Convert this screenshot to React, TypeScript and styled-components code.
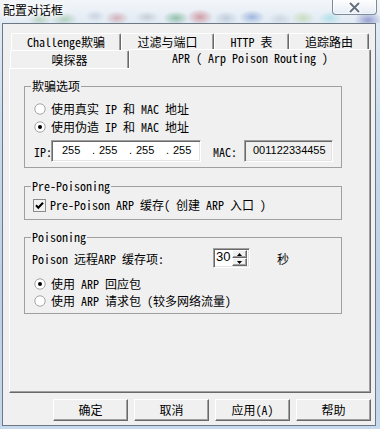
import React from 'react'
import styled, { createGlobalStyle, css } from 'styled-components'

const uiFont = `"Noto Sans Mono CJK SC", "Liberation Mono", "Noto Sans CJK SC", monospace`
const digitFont = `"Liberation Sans", "Noto Sans CJK SC", sans-serif`

const GlobalStyle = createGlobalStyle`
	html, body {
		margin: 0;
		padding: 0;
	}
	body {
		width: 380px;
		height: 429px;
		overflow: hidden;
		font-family: ${uiFont};
		font-size: 12px;
		color: #000;
	}
`

const Window = styled.div`
	width: 380px;
	height: 429px;
	box-sizing: border-box;
	display: flex;
	flex-direction: column;
	padding: 0 4px 3px 2px;
	background: linear-gradient(180deg, #f3f6f9 0px, #e2ebf4 22px, #c9dbec 120px, #bcd0e6 300px, #c7d9ec 429px);
`

const TitleBar = styled.div`
	height: 23px;
	margin: 0 -4px 0 -2px;
	padding-left: 3px;
	display: flex;
	justify-content: space-between;
	align-items: flex-start;
	background:
		radial-gradient(12px 7px at 40px 19px, rgba(120, 175, 120, .45), transparent),
		radial-gradient(14px 7px at 64px 19px, rgba(100, 165, 110, .4), transparent),
		radial-gradient(10px 6px at 95px 16px, rgba(170, 180, 200, .45), transparent),
		radial-gradient(12px 7px at 117px 18px, rgba(190, 110, 120, .45), transparent),
		radial-gradient(12px 6px at 147px 17px, rgba(160, 170, 185, .45), transparent),
		radial-gradient(13px 7px at 176px 18px, rgba(70, 150, 100, .5), transparent),
		radial-gradient(13px 8px at 200px 17px, rgba(190, 80, 90, .5), transparent),
		radial-gradient(12px 7px at 226px 18px, rgba(150, 170, 190, .45), transparent),
		radial-gradient(13px 7px at 252px 17px, rgba(90, 130, 200, .5), transparent),
		radial-gradient(12px 7px at 280px 19px, rgba(170, 185, 200, .4), transparent),
		radial-gradient(12px 7px at 303px 18px, rgba(170, 200, 130, .45), transparent),
		radial-gradient(12px 7px at 330px 18px, rgba(120, 210, 220, .45), transparent),
		radial-gradient(14px 9px at 368px 20px, rgba(90, 100, 180, .55), transparent);
`

const Title = styled.span`
	margin-top: 2px;
	font-family: "Noto Sans CJK SC", sans-serif;
	font-size: 12px;
	line-height: 16px;
	color: #000;
	text-shadow: 0 0 6px #fff, 0 0 8px #fff, 0 0 10px #fff;
`

const CloseButton = styled.div`
	width: 45px;
	height: 15px;
	margin-right: 3px;
	box-sizing: border-box;
	border: 1px solid #7e8a99;
	border-top: none;
	border-radius: 0 0 4px 4px;
	background: linear-gradient(180deg, rgba(255, 255, 255, .75), rgba(228, 236, 245, .55));
	box-shadow: inset 0 0 0 1px rgba(255, 255, 255, .6);
	display: flex;
	align-items: center;
	justify-content: center;
`

const Client = styled.div`
	flex: 1;
	box-sizing: border-box;
	background: #f0f0f0;
	border: 1px solid #6d7886;
	padding: 9px 4px 0 6px;
	display: flex;
	flex-direction: column;
`

const TabRow = styled.div<{indent: number, rowHeight: number}>`
	display: flex;
	align-items: flex-end;
	height: ${(props) => props.rowHeight}px;
	padding-left: ${(props) => props.indent}px;
`

const Tab = styled.div<{width: number, selected?: boolean}>`
	position: relative;
	box-sizing: border-box;
	width: ${(props) => props.width}px;
	height: 100%;
	background: #f0f0f0;
	border-top: 1px solid #fff;
	border-left: 1px solid #fff;
	border-right: 1px solid #696969;
	box-shadow: inset -1px 0 0 #a0a0a0;
	border-radius: 2px 2px 0 0;
	display: flex;
	align-items: center;
	justify-content: center;
	white-space: pre;
	line-height: 14px;

	${(props) => props.selected && css`
		height: 20px;
		margin-bottom: -1px;
		padding-bottom: 4px;
		z-index: 1;
	`}
`

const Panel = styled.div`
	box-sizing: border-box;
	height: 325px;
	border-top: 1px solid #fff;
	border-left: 1px solid #fff;
	border-right: 1px solid #696969;
	border-bottom: 1px solid #696969;
	box-shadow: inset -1px -1px 0 #a0a0a0;
	padding: 10px 0 0 14px;
	display: flex;
	flex-direction: column;
`

const Group = styled.fieldset<{gapTop?: number, padTop: number, padBottom: number}>`
	margin: ${(props) => props.gapTop || 0}px 0 0 0;
	width: 318px;
	min-width: 0;
	box-sizing: border-box;
	border: 1px solid #a0a0a0;
	padding: ${(props) => props.padTop}px 6px ${(props) => props.padBottom}px 9px;
`

const Legend = styled.legend`
	padding: 0 1px;
	margin-left: -3px;
	line-height: 14px;
	white-space: pre;
`

const Row = styled.div<{rowHeight: number, gapTop?: number, shift?: number}>`
	display: flex;
	align-items: center;
	height: ${(props) => props.rowHeight}px;
	margin-top: ${(props) => props.gapTop || 0}px;
	margin-left: ${(props) => props.shift || 0}px;
	white-space: pre;
`

const Mark = styled.span<{gap: number}>`
	display: flex;
	flex: none;
	margin-right: ${(props) => props.gap}px;
`

const Text = styled.span`
	line-height: 14px;
	white-space: pre;
`

const FieldLabel = styled.span<{width: number}>`
	width: ${(props) => props.width}px;
	flex: none;
	white-space: pre;
`

const Sunken = styled.div<{width: number, height: number, readOnly?: boolean, padLeft: number}>`
	box-sizing: border-box;
	flex: none;
	width: ${(props) => props.width}px;
	height: ${(props) => props.height}px;
	border-top: 1px solid #a0a0a0;
	border-left: 1px solid #a0a0a0;
	border-right: 1px solid #fff;
	border-bottom: 1px solid #fff;
	box-shadow: inset 1px 1px 0 #696969, inset -1px -1px 0 #e3e3e3;
	background: ${(props) => props.readOnly ? '#f0f0f0' : '#fff'};
	padding-left: ${(props) => props.padLeft}px;
	display: flex;
	align-items: center;
	font-family: ${digitFont};
	font-size: 11px;
	padding-bottom: 2px;
`

const Octet = styled.span`
	width: 30px;
	flex: none;
`

const Dot = styled.span`
	width: 7px;
	flex: none;
`

const SpinValue = styled.span`
	flex: 1;
	font-size: 13px;
	padding-bottom: 1px;
`

const SpinButtons = styled.div`
	display: flex;
	flex-direction: column;
	width: 15px;
	height: 16px;
	margin-right: 2px;
	margin-top: 2px;
`

const SpinButton = styled.div`
	flex: 1;
	box-sizing: border-box;
	border: 1px solid;
	border-color: #fff #696969 #696969 #fff;
	box-shadow: inset -1px -1px 0 #a0a0a0;
	background: #f0f0f0;
	display: flex;
	align-items: center;
	justify-content: center;
`

const Seconds = styled.span`
	margin-left: 27px;
`

const ButtonRow = styled.div`
	display: flex;
	justify-content: flex-end;
	gap: 6px;
	margin-top: 6px;
	padding-right: 0;
`

const Button = styled.div`
	width: 75px;
	height: 22px;
	box-sizing: border-box;
	border: 1px solid;
	border-color: #fff #696969 #696969 #fff;
	box-shadow: inset -1px -1px 0 #a0a0a0;
	background: #f0f0f0;
	display: flex;
	align-items: center;
	justify-content: center;
	white-space: pre;
	line-height: 14px;
`

const Radio = ({checked}: {checked?: boolean}) => (
	<svg width='12' height='12' viewBox='0 0 12 12'>
		<circle cx='6' cy='6' r='5.2' fill='#fff' stroke='#a4a4a4' strokeWidth='1' />
		{checked && <circle cx='6' cy='6' r='2' fill='#000' />}
	</svg>
)

const Checkbox = () => (
	<svg width='13' height='13' viewBox='0 0 13 13'>
		<rect x='0.5' y='0.5' width='12' height='12' fill='#f2f2f2' stroke='#8c8c8c' />
		<path d='M3 6.3 L5.3 8.7 L10 3.8' fill='none' stroke='#000' strokeWidth='2' />
	</svg>
)

const Arrow = ({up}: {up?: boolean}) => (
	<svg width='5' height='3' viewBox='0 0 5 3'>
		<path d={up ? 'M0 3 L2.5 0 L5 3 Z' : 'M0 0 L2.5 3 L5 0 Z'} fill='#000' />
	</svg>
)

export default function App() {
	return (
		<>
			<GlobalStyle />
			<Window>
				<TitleBar>
					<Title>配置对话框</Title>
					<CloseButton>
						<svg width='13' height='11' viewBox='0 0 13 11'>
							<path d='M2.5 1.5 L10.5 9.5 M10.5 1.5 L2.5 9.5' stroke='#fff' strokeWidth='4' strokeLinecap='round' />
							<path d='M2.5 1.5 L10.5 9.5 M10.5 1.5 L2.5 9.5' stroke='#66717f' strokeWidth='2' strokeLinecap='round' />
						</svg>
					</CloseButton>
				</TitleBar>
				<Client>
					<TabRow indent={2} rowHeight={17}>
						<Tab width={110}>Challenge欺骗</Tab>
						<Tab width={93}>过滤与端口</Tab>
						<Tab width={75}>HTTP 表</Tab>
						<Tab width={80}>追踪路由</Tab>
					</TabRow>
					<TabRow indent={1} rowHeight={18}>
						<Tab width={119}>嗅探器</Tab>
						<Tab width={242} selected>APR ( Arp Poison Routing )</Tab>
					</TabRow>
					<Panel>
						<Group padTop={7} padBottom={5}>
							<Legend>欺骗选项</Legend>
							<Row rowHeight={18}>
								<Mark gap={5}><Radio /></Mark>
								<Text>使用真实 IP 和 MAC 地址</Text>
							</Row>
							<Row rowHeight={18}>
								<Mark gap={5}><Radio checked /></Mark>
								<Text>使用伪造 IP 和 MAC 地址</Text>
							</Row>
							<Row rowHeight={22} gapTop={4}>
								<FieldLabel width={17}>IP:</FieldLabel>
								<Sunken width={150} height={22} padLeft={10}>
									<Octet>255</Octet><Dot>.</Dot>
									<Octet>255</Octet><Dot>.</Dot>
									<Octet>255</Octet><Dot>.</Dot>
									<Octet>255</Octet>
								</Sunken>
								<FieldLabel width={12} />
								<FieldLabel width={31}>MAC:</FieldLabel>
								<Sunken width={89} height={22} padLeft={8} readOnly>001122334455</Sunken>
							</Row>
						</Group>
						<Group gapTop={11} padTop={3} padBottom={5}>
							<Legend>Pre-Poisoning</Legend>
							<Row rowHeight={18} shift={-1}>
								<Mark gap={4}><Checkbox /></Mark>
								<Text>Pre-Poison ARP 缓存( 创建 ARP 入口 )</Text>
							</Row>
						</Group>
						<Group gapTop={10} padTop={4} padBottom={4}>
							<Legend>Poisoning</Legend>
							<Row rowHeight={20} shift={-2}>
								<FieldLabel width={181}>Poison 远程ARP 缓存项:</FieldLabel>
								<Sunken width={37} height={20} padLeft={2} readOnly={false}>
									<SpinValue>30</SpinValue>
									<SpinButtons>
										<SpinButton><Arrow up /></SpinButton>
										<SpinButton><Arrow /></SpinButton>
									</SpinButtons>
								</Sunken>
								<Seconds>秒</Seconds>
							</Row>
							<Row rowHeight={17} gapTop={7}>
								<Mark gap={5}><Radio checked /></Mark>
								<Text>使用 ARP 回应包</Text>
							</Row>
							<Row rowHeight={17}>
								<Mark gap={5}><Radio /></Mark>
								<Text>使用 ARP 请求包 (较多网络流量)</Text>
							</Row>
						</Group>
					</Panel>
					<ButtonRow>
						<Button>确定</Button>
						<Button>取消</Button>
						<Button>应用(A)</Button>
						<Button>帮助</Button>
					</ButtonRow>
				</Client>
			</Window>
		</>
	)
}
